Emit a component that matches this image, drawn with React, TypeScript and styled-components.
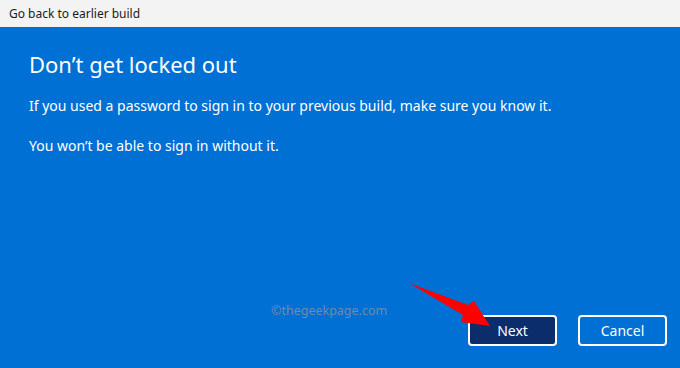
import React from "react";
import styled, { createGlobalStyle } from "styled-components";

const Global = createGlobalStyle`
  html, body { margin: 0; padding: 0; width: 680px; height: 368px; overflow: hidden; }
  body { font-family: "Noto Sans", "Open Sans", sans-serif; }
  #root { width: 680px; height: 368px; }
`;

const Window = styled.div`
  position: relative;
  width: 680px;
  height: 368px;
  display: flex;
  flex-direction: column;
  background: #0070d4;
`;

const TitleBar = styled.div`
  height: 27px;
  flex: none;
  background: #f3f3f3;
  display: flex;
  align-items: center;
  padding-left: 9px;
  font-size: 12px;
  color: #1a1a1a;
`;

const Main = styled.div`
  flex: 1;
  display: flex;
  flex-direction: column;
  padding: 22px 13px 22px 29px;
  color: #ffffff;
`;

const Heading = styled.h1`
  margin: 0;
  font-size: 22px;
  font-weight: 400;
  line-height: 30px;
`;

const Para = styled.p<{ $top: number }>`
  margin: ${(p) => p.$top}px 0 0 0;
  font-size: 14px;
  line-height: 20px;
`;

const Spacer = styled.div`
  flex: 1;
`;

const Footer = styled.div`
  display: flex;
  justify-content: flex-end;
  gap: 21px;
`;

const Button = styled.button<{ $primary?: boolean }>`
  width: 89px;
  height: 31px;
  box-sizing: border-box;
  border: 2px solid #ffffff;
  border-radius: 4px;
  background: ${(p) => (p.$primary ? "#0c2d6b" : "#0070d4")};
  color: #ffffff;
  font-family: "Noto Sans", "Open Sans", sans-serif;
  font-size: 14px;
  padding: 0;
  display: flex;
  align-items: center;
  justify-content: center;
`;

const Watermark = styled.div`
  position: absolute;
  left: 271px;
  top: 302px;
  font-size: 12.5px;
  color: #6d8bb0;
`;

const Arrow = styled.svg`
  position: absolute;
  left: 0;
  top: 0;
  pointer-events: none;
`;

export default function App() {
  return (
    <>
      <Global />
      <Window>
        <TitleBar>Go back to earlier build</TitleBar>
        <Main>
          <Heading>Don’t get locked out</Heading>
          <Para $top={17}>
            If you used a password to sign in to your previous build, make sure you know it.
          </Para>
          <Para $top={20}>You won’t be able to sign in without it.</Para>
          <Spacer />
          <Footer>
            <Button $primary>Next</Button>
            <Button>Cancel</Button>
          </Footer>
        </Main>
        <Watermark>©thegeekpage.com</Watermark>
        <Arrow width="680" height="368" viewBox="0 0 680 368">
          <path
            d="M409 283 L468 305 L474 301 L490 326 L461 322 L463 315 Z"
            fill="#ff0000"
          />
        </Arrow>
      </Window>
    </>
  );
}
